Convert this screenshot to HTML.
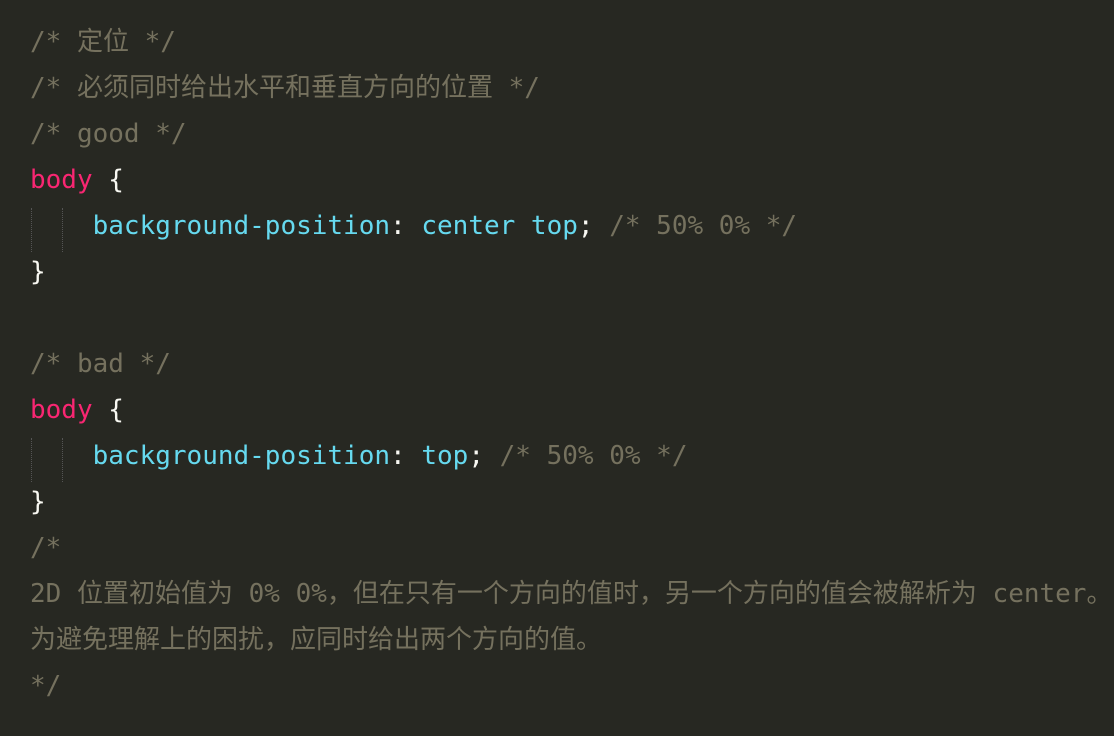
<!DOCTYPE html>
<html><head><meta charset="utf-8"><style>
html,body{margin:0;padding:0;}
body{width:1114px;height:736px;background:#272822;overflow:hidden;position:relative;}
pre{margin:0;position:absolute;left:30px;top:19px;font-family:"DejaVu Sans Mono","Noto Sans CJK SC",monospace;font-size:26px;line-height:46px;color:#f8f8f2;white-space:pre;}
.c{color:#75715e}.k{color:#f92672}.p{color:#66d9ef}.v{color:#66d9ef}
.g{position:absolute;width:0;border-left:1px dotted #555;height:44px}
</style></head><body>
<div class="g" style="left:31px;top:208px"></div><div class="g" style="left:62px;top:208px"></div>
<div class="g" style="left:31px;top:438px"></div><div class="g" style="left:62px;top:438px"></div>
<pre><span class="c">/* 定位 */</span>
<span class="c">/* 必须同时给出水平和垂直方向的位置 */</span>
<span class="c">/* good */</span>
<span class="k">body</span> {
    <span class="p">background-position</span>: <span class="v">center top</span>; <span class="c">/* 50% 0% */</span>
}

<span class="c">/* bad */</span>
<span class="k">body</span> {
    <span class="p">background-position</span>: <span class="v">top</span>; <span class="c">/* 50% 0% */</span>
}
<span class="c">/*
2D 位置初始值为 0% 0%，但在只有一个方向的值时，另一个方向的值会被解析为 center。
为避免理解上的困扰，应同时给出两个方向的值。
*/</span></pre>
</body></html>
